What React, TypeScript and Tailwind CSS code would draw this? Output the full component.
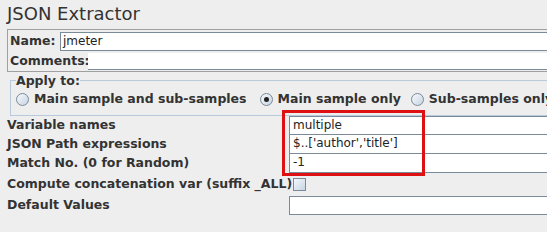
export default function App() {
  const field =
    "h-[19px] bg-white border border-[#7a8a99] pl-[3px] text-[12px] leading-[17px] text-[#222222] whitespace-nowrap overflow-hidden font-normal";

  return (
    <div className="w-[547px] h-[232px] overflow-hidden bg-[#eeeeee] text-[#333333] font-['DejaVu_Sans',sans-serif]">
      <h1 className="pl-[7px] pt-[2px] h-[29px] text-[18px] leading-[24px] font-normal">JSON Extractor</h1>

      {/* name + comments */}
      <div className="ml-[7px] w-[560px] h-[43px] border border-[#a0a0a0] flex flex-col">
        <div className="flex items-center h-[22px] pt-[1px]">
          <span className="pl-[2px] w-[52px] text-[12.5px] font-bold">Name:</span>
          <div className="flex-1 h-[19px] bg-white border-y border-l border-[#7a8a99] pl-[2px] text-[12px] leading-[17px] text-[#222222]">
            jmeter
          </div>
        </div>
        <div className="flex items-center h-[19px] mt-[1px]">
          <span className="pl-[2px] w-[80px] text-[12.5px] font-bold">Comments:</span>
          <div className="flex-1 h-[17px] bg-white border-b border-[#7a8a99]" />
        </div>
      </div>

      {/* apply to */}
      <fieldset className="ml-[10px] mt-[1px] w-[560px] h-[43px] border border-[#b8cadb] px-[5px] pt-0">
        <legend className="px-0 text-[12.5px] font-bold leading-[15px]">Apply to:</legend>
        <div className="flex items-center gap-[5px] h-[23px] text-[12.5px] font-bold whitespace-nowrap">
          <Radio />
          <span className="mr-[8px]">Main sample and sub-samples</span>
          <Radio checked />
          <span className="mr-[5px]">Main sample only</span>
          <Radio />
          <span>Sub-samples only</span>
        </div>
      </fieldset>

      {/* fields */}
      <div className="relative ml-[7px] w-[560px] grid grid-cols-[282px_1fr] text-[12.5px] font-bold">
        <span className="leading-[17px] h-[19px]">Variable names</span>
        <div className={field}>multiple</div>
        <span className="leading-[17px] h-[19px]">JSON Path expressions</span>
        <div className={field + " border-t-0"}>{"$..['author','title']"}</div>
        <span className="leading-[17px] h-[19px]">Match No. (0 for Random)</span>
        <div className={field + " border-t-0"}>-1</div>
        <span className="leading-[20px] h-[23px] pt-[1px] whitespace-nowrap">Compute concatenation var (suffix _ALL)</span>
        <div className="h-[23px] pt-[5px] pl-[4px]">
          <div className="w-[13px] h-[13px] border border-[#7a8a99] bg-gradient-to-br from-[#f4f8fc] to-[#c6d4e2]" />
        </div>
        <span className="leading-[17px] h-[19px]">Default Values</span>
        <div className={field} />

        <div className="absolute left-[275px] top-[-6px] w-[143px] h-[66px] border-[3px] border-[#dd1111] pointer-events-none" />
      </div>
    </div>
  );
}

function Radio({ checked = false }: { checked?: boolean }) {
  return (
    <span className="relative inline-flex items-center justify-center w-[13px] h-[13px] rounded-full border border-[#7a8a99] bg-gradient-to-br from-[#f6f9fc] to-[#c7d5e3] shrink-0">
      {checked && <span className="w-[5px] h-[5px] rounded-full bg-[#222222]" />}
    </span>
  );
}
